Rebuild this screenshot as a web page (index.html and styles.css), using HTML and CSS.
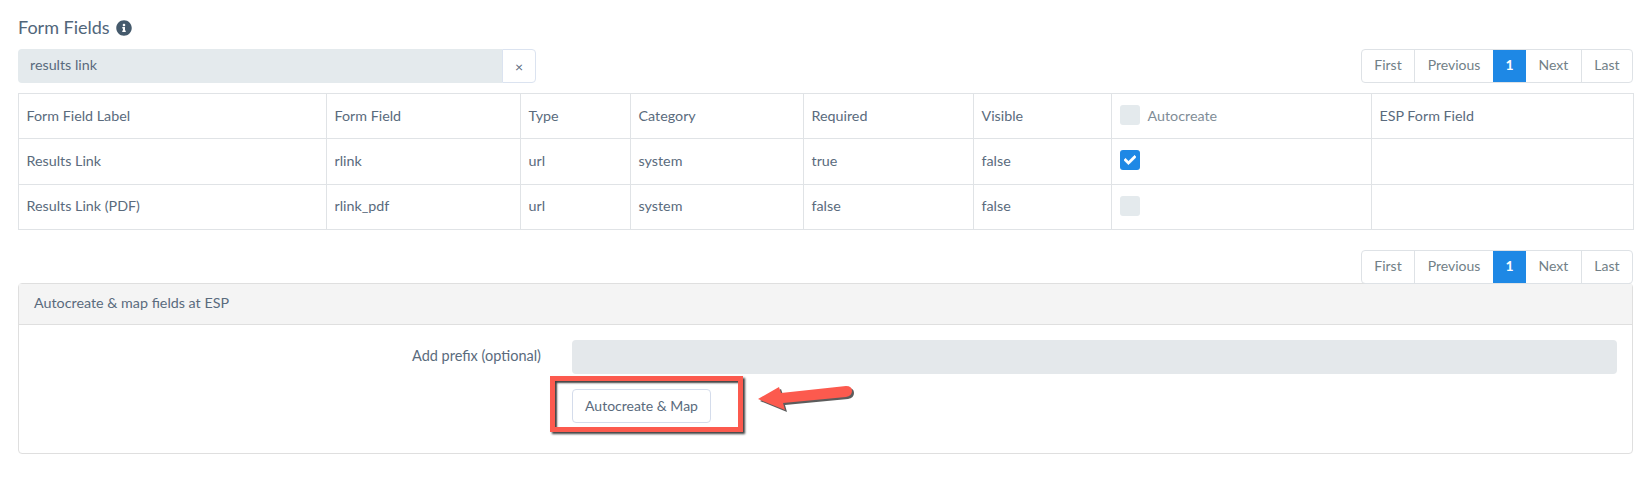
FILE: index.html
```html
<!DOCTYPE html>
<html lang="en">
<head>
<meta charset="utf-8">
<title>Form Fields</title>
<link rel="stylesheet" href="styles.css">
</head>
<body>
<main class="page">
  <h2 class="title">Form Fields
    <svg class="info" viewBox="0 0 512 512"><path d="M256 8C119 8 8 119 8 256s111 248 248 248 248-111 248-248S393 8 256 8zm0 110c23 0 42 19 42 42s-19 42-42 42-42-19-42-42 19-42 42-42zm56 254c0 7-5 12-12 12h-88c-7 0-12-5-12-12v-24c0-7 5-12 12-12h12v-64h-12c-7 0-12-5-12-12v-24c0-7 5-12 12-12h64c7 0 12 5 12 12v100h12c7 0 12 5 12 12v24z"/></svg>
  </h2>
  <div class="toolbar">
    <div class="search">
      <div class="search-input">results link</div>
      <button class="clear">×</button>
    </div>
    <nav class="pager">
      <a>First</a><a>Previous</a><a class="on">1</a><a>Next</a><a>Last</a>
    </nav>
  </div>
  <table class="grid">
    <colgroup>
      <col class="c1"><col class="c2"><col class="c3"><col class="c4"><col class="c5"><col class="c6"><col class="c7"><col class="c8">
    </colgroup>
    <tr class="r1"><td>Form Field Label</td><td>Form Field</td><td>Type</td><td>Category</td><td>Required</td><td>Visible</td><td><span class="chk-wrap"><span class="chk"></span><span class="muted">Autocreate</span></span></td><td>ESP Form Field</td></tr>
    <tr class="r2"><td>Results Link</td><td>rlink</td><td>url</td><td>system</td><td>true</td><td>false</td><td><span class="chk-wrap"><span class="chk checked"><svg viewBox="0 0 512 512"><path d="M174 439L7 273c-10-10-10-26 0-36l36-36c10-10 26-10 36 0l113 112L433 72c10-10 26-10 36 0l36 36c10 10 10 26 0 36L210 439c-10 10-26 10-36 0z"/></svg></span></span></td><td></td></tr>
    <tr class="r3"><td>Results Link (PDF)</td><td>rlink_pdf</td><td>url</td><td>system</td><td>false</td><td>false</td><td><span class="chk-wrap"><span class="chk"></span></span></td><td></td></tr>
  </table>
  <div class="toolbar end">
    <nav class="pager">
      <a>First</a><a>Previous</a><a class="on">1</a><a>Next</a><a>Last</a>
    </nav>
  </div>
  <section class="panel">
    <header class="panel-head">Autocreate &amp; map fields at ESP</header>
    <div class="panel-body">
      <div class="form-row">
        <label class="form-label">Add prefix (optional)</label>
        <div class="form-input"></div>
      </div>
      <div class="form-row">
        <span></span>
        <div><button class="btn">Autocreate &amp; Map</button></div>
      </div>
    </div>
  </section>
  <div class="callout"></div>
  <svg class="arrow" viewBox="0 0 110 40">
    <path class="arrow-shadow" d="M4 22 L25 10 L27 16 L92 9 Q98 9 98 14 Q98 19 92 20 L29 26 L31 33 Z"/>
    <path class="arrow-fill" d="M2 20 L23 8 L25 14 L90 7 Q96 7 96 12 Q96 17 90 18 L27 24 L29 31 Z"/>
  </svg>
</main>
</body>
</html>
```
FILE: styles.css
```css
* { box-sizing: border-box; }
html, body { margin: 0; padding: 0; background: #fff; }
body {
  font-family: "Lato", "Noto Sans", sans-serif;
  font-size: 14.3px;
  color: #5a6b7d;
}
.page { position: relative; width: 1649px; height: 487px; padding: 17px 16px 0 18px; }
.title {
  margin: 0;
  height: 21px;
  font-size: 18px;
  font-weight: 400;
  line-height: 21px;
  color: #51667a;
  display: flex;
  align-items: center;
  gap: 6px;
}
.info { width: 16px; height: 16px; fill: #455a6c; }
.toolbar { display: flex; justify-content: space-between; margin-top: 11px; height: 34px; }
.toolbar.end { justify-content: flex-end; margin-top: 20px; }
.search { display: flex; width: 518px; }
.search-input {
  flex: 1;
  background: #e4eaed;
  border-radius: 4px 0 0 4px;
  padding-left: 12px;
  line-height: 31px;
  color: #5a6b7d;
}
.clear {
  width: 34px;
  background: #fff;
  border: 1px solid #dbe3f0;
  border-radius: 0 4px 4px 0;
  color: #5a6b7d;
  font: 14px "Lato", sans-serif;
  padding: 0;
}
.pager {
  display: flex;
  border: 1px solid #dee2e6;
  border-radius: 4px;
  overflow: hidden;
  font-size: 14px;
}
.pager a {
  display: block;
  padding: 0 12.5px;
  line-height: 30px;
  border-left: 1px solid #dee2e6;
  color: #727f87;
}
.pager a:first-child { border-left: 0; }
.pager a.on { background: #1e88e5; color: #fff; font-weight: 700; border-left: 0; }
.pager a.on + a { border-left: 0; }
.grid {
  width: 1615px;
  margin-top: 10px;
  border-collapse: collapse;
  table-layout: fixed;
}
.grid td {
  border: 1px solid #e0e3e6;
  padding: 0 8px 2px 7.5px;
  color: #5a6b7d;
  vertical-align: middle;
}
.grid .r2 td, .grid .r3 td { padding-bottom: 3px; }
.r1 { height: 45px; }
.r2 { height: 46px; }
.r3 { height: 45px; }
.c1 { width: 308px; }
.c2 { width: 194px; }
.c3 { width: 110px; }
.c4 { width: 173px; }
.c5 { width: 170px; }
.c6 { width: 138px; }
.c7 { width: 260px; }
.c8 { width: 262px; }
.chk-wrap { display: flex; align-items: center; gap: 8px; }
.chk {
  width: 20px;
  height: 20px;
  border-radius: 3px;
  background: #e4eaed;
  display: flex;
  align-items: center;
  justify-content: center;
}
.chk.checked { background: #1e88e5; }
.chk svg { width: 12px; height: 12px; fill: #fff; stroke: #fff; stroke-width: 30; }
.muted { color: #7f8d97; }
.panel {
  border: 1px solid #dfdfdf;
  border-radius: 4px;
  height: 171px;
  margin-top: -1px;
}
.panel-head {
  height: 41px;
  background: #f4f4f4;
  border-bottom: 1px solid #dfdfdf;
  padding-left: 15px;
  line-height: 38px;
  color: #5a6b7d;
}
.panel-body { padding: 15px 15px 0 15px; }
.form-row { display: grid; grid-template-columns: 508px 1fr; column-gap: 30px; }
.form-row + .form-row { margin-top: 15px; }
.form-label { text-align: right; line-height: 32px; font-size: 14.5px; padding-right: 1px; }
.form-input { height: 34px; background: #e4e8eb; border-radius: 4px; }
.btn {
  height: 34px;
  width: 139px;
  background: #fff;
  border: 1px solid #d4dceb;
  border-radius: 4px;
  color: #5a6b7d;
  font: 14px "Lato", sans-serif;
  padding: 0 0 2px;
}
.callout {
  position: absolute;
  left: 550px;
  top: 376px;
  width: 193px;
  height: 56px;
  border: 5px solid #fc5a4e;
  box-shadow: 2px 2px 2px rgba(30,30,30,.85), inset 2px 2px 2px rgba(30,30,30,.85);
}
.arrow { position: absolute; left: 756px; top: 379px; width: 110px; height: 40px; }
.arrow-shadow { fill: #333; opacity: .8; }
.arrow-fill { fill: #fc5a4e; }
```
